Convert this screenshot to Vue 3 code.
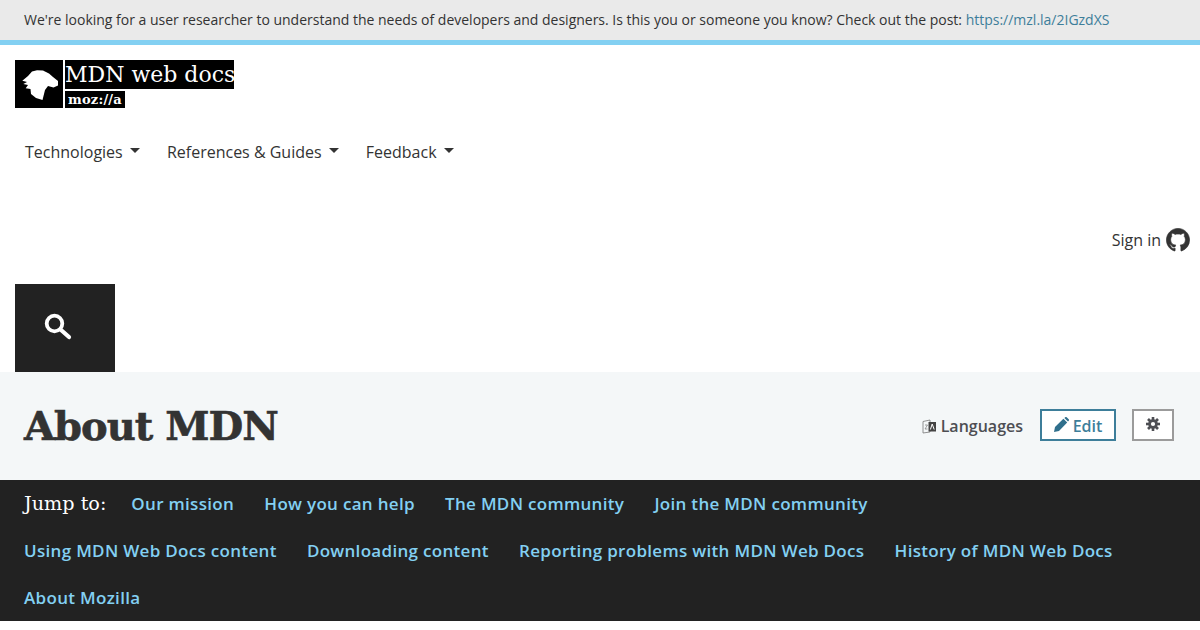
<script setup>
const nav = ['Technologies', 'References & Guides', 'Feedback']
const jumpRows = [
  ['Our mission', 'How you can help', 'The MDN community', 'Join the MDN community'],
  ['Using MDN Web Docs content', 'Downloading content', 'Reporting problems with MDN Web Docs', 'History of MDN Web Docs'],
  ['About Mozilla']
]
</script>

<template>
  <div class="page">
    <div class="banner">
      <p>We're looking for a user researcher to understand the needs of developers and designers. Is this you or someone you know? Check out the post: <a>https://mzl.la/2IGzdXS</a></p>
    </div>

    <header class="header">
      <div class="logo">
        <div class="logo-mark">
          <svg width="48" height="48" viewBox="0 0 48 48">
            <path fill="#fff" d="M7.3 20.7 L13 16 L17 11.5 L22 10.3 L28 10.5 L34 13.5 L38 17 L43 21 L43 25.5 L38.5 27.5 L33 26 L30 30 L28.5 36 L27.5 40 L21 38 L16 34 L15.5 29 L10.7 28.3 L13 25 L8.3 24 L12 22 Z"/>
          </svg>
        </div>
        <div class="logo-words">
          <div class="logo-title">MDN web docs</div>
          <div class="logo-moz">moz://a</div>
        </div>
      </div>

      <nav class="nav">
        <a v-for="item in nav" :key="item" class="nav-item">{{ item }}<span class="caret"></span></a>
      </nav>

      <div class="signin">
        <span>Sign in</span>
        <svg width="24" height="24" viewBox="0 0 16 16">
          <path fill="#333" stroke="#333" stroke-width=".45" d="M8 .3C3.75.3.3 3.75.3 8c0 3.4 2.2 6.3 5.27 7.3.38.07.52-.16.52-.37 0-.18-.01-.79-.01-1.43-1.93.36-2.43-.47-2.59-.9-.09-.22-.46-.9-.79-1.09-.27-.14-.65-.5-.01-.51.6-.01 1.04.56 1.18.79.69 1.16 1.8.84 2.24.63.07-.5.27-.84.49-1.03-1.71-.19-3.5-.86-3.5-3.8 0-.84.3-1.53.79-2.07-.08-.19-.35-.98.08-2.04 0 0 .64-.2 2.12.79.62-.17 1.27-.26 1.92-.26s1.31.09 1.92.26c1.47-1 2.12-.79 2.12-.79.42 1.06.15 1.85.08 2.04.49.54.79 1.22.79 2.07 0 2.95-1.8 3.61-3.51 3.8.28.24.52.7.52 1.42 0 1.03-.01 1.86-.01 2.12 0 .2.14.44.53.37A7.7 7.7 0 0 0 15.7 8C15.7 3.75 12.25.3 8 .3z"/>
        </svg>
      </div>

      <div class="search">
        <svg width="28" height="28" viewBox="0 0 28 28">
          <circle cx="10.5" cy="11.5" r="7.8" fill="none" stroke="#fff" stroke-width="3.8"/>
          <path d="M16.5 17.5 L25 25" stroke="#fff" stroke-width="4.2" stroke-linecap="round"/>
        </svg>
      </div>
    </header>

    <section class="title-bar">
      <h1>About MDN</h1>
      <div class="actions">
        <a class="languages">
          <svg width="15" height="15" viewBox="0 0 15 15">
            <path d="M1 2.5 L8 1 V13 L1 14 Z" fill="#f4f7f8" stroke="#777" stroke-width=".8"/>
            <rect x="6.5" y="3" width="7.5" height="9.5" fill="#444"/>
            <path d="M8.4 10.5 L10.2 5 L12.2 10.5" fill="none" stroke="#fff" stroke-width="1"/>
            <path d="M3 6 H5.5 L3 10 H5.5" fill="none" stroke="#777" stroke-width=".7"/>
          </svg>
          Languages
        </a>
        <a class="btn btn-edit">
          <svg width="15" height="15" viewBox="0 0 15 15" class="edit-icon">
            <path fill="#2f6f8c" d="M0 15 L1 10 L9.4 1.8 L13.2 5.6 L5 14 Z M10.4 .9 L11.2 .2 Q12 -.3 12.7 .3 L14.7 2.3 Q15.3 3 14.7 3.8 L14 4.6 Z"/>
          </svg>
          Edit
        </a>
        <a class="btn btn-gear">
          <svg width="14" height="14" viewBox="0 0 14 14">
            <g stroke="#4d4e53" stroke-width="2.6">
              <path d="M7 0 V14"/><path d="M0 7 H14"/><path d="M2 2 L12 12"/><path d="M12 2 L2 12"/>
            </g>
            <circle cx="7" cy="7" r="4.8" fill="#4d4e53"/>
            <circle cx="7" cy="7" r="2.1" fill="#fff"/>
          </svg>
        </a>
      </div>
    </section>

    <section class="jump">
      <div v-for="(row, i) in jumpRows" :key="i" class="jump-row">
        <span v-if="i === 0" class="jump-label">Jump to:</span>
        <a v-for="link in row" :key="link">{{ link }}</a>
      </div>
    </section>
  </div>
</template>

<style>
html, body { margin: 0; background: #fff; overflow: hidden; }
</style>

<style scoped>
.page {
  width: 1200px;
  height: 630px;
  overflow: hidden;
  font-family: "Open Sans", sans-serif;
  color: #333;
}
.banner {
  background: #eaeaea;
  border-bottom: 5px solid #83d0f2;
  padding: 0 24px 2px;
  box-sizing: content-box;
  height: 38px;
  display: flex;
  align-items: center;
}
.banner p { margin: 0; font-size: 14px; color: #333; letter-spacing: -.007px; white-space: nowrap; }
.banner a { color: #3d7e9a; }

.header {
  height: 327px;
  padding: 15px 10px 0 15px;
  box-sizing: border-box;
  display: flex;
  flex-direction: column;
  background: #fff;
}
.logo { display: flex; gap: 2px; height: 48px; }
.logo-mark { width: 48px; height: 48px; background: #000; }
.logo-words { display: flex; flex-direction: column; gap: 2px; align-items: flex-start; }
.logo-title {
  width: 169px;
  height: 29px;
  box-sizing: border-box;
  background: #000;
  color: #fff;
  font-family: "DejaVu Serif", serif;
  font-size: 22px;
  font-weight: 400;
  line-height: 29px;
  white-space: nowrap;
  overflow: hidden;
}
.logo-moz {
  width: 60px;
  height: 17px;
  background: #000;
  color: #fff;
  font-family: "DejaVu Serif", serif;
  font-weight: 700;
  font-size: 13px;
  line-height: 17px;
  padding-left: 3px;
  box-sizing: border-box;
  letter-spacing: .2px;
}
.nav { display: flex; gap: 26.7px; padding: 32px 0 0 10px; height: 24px; }
.nav-item { display: flex; align-items: center; font-size: 16px; line-height: 24px; color: #333; white-space: nowrap; }
.caret {
  margin-left: 7.5px;
  margin-top: -3px;
  border-top: 5px solid #333;
  border-left: 5px solid transparent;
  border-right: 5px solid transparent;
}
.signin {
  display: flex;
  justify-content: flex-end;
  align-items: center;
  gap: 5px;
  margin-top: 64px;
  height: 24px;
  font-size: 16px;
  color: #333;
}
.search {
  margin-top: 32px;
  width: 100px;
  height: 88px;
  background: #222;
  box-sizing: border-box;
  padding: 28px 0 0 29px;
}
.title-bar {
  height: 108px;
  background: #f4f7f8;
  display: flex;
  align-items: center;
  justify-content: space-between;
  padding: 0 26px 0 24px;
  box-sizing: border-box;
}
h1 {
  margin: 0;
  font-family: "DejaVu Serif", serif;
  font-weight: 700;
  font-size: 40px;
  line-height: 1;
  color: #333;
  letter-spacing: -1px;
  -webkit-text-stroke: .6px #333;
}
.actions { display: flex; align-items: center; }
.languages {
  display: flex;
  align-items: center;
  gap: 4px;
  font-size: 16px;
  font-weight: 600;
  color: #4d4e53;
  margin-right: 17px;
}
.btn {
  height: 32px;
  box-sizing: border-box;
  background: #fff;
  display: flex;
  align-items: center;
  justify-content: center;
  font-size: 16px;
  font-weight: 600;
  margin-bottom: 2px;
}
.btn-edit {
  width: 76px;
  border: 2px solid #3d7e9a;
  color: #3d7e9a;
  gap: 4px;
  margin-right: 16px;
  padding-top: 2px;
}
.edit-icon { margin-top: -3px; }
.btn-gear { width: 42px; border: 2px solid #9b9b9b; padding-bottom: 3px; }
.jump {
  height: 141px;
  background: #222;
  padding: 0 24px;
  box-sizing: border-box;
}
.jump-row { display: flex; gap: 30.2px; height: 47px; align-items: center; white-space: nowrap; }
.jump-row a { color: #83d0f2; font-size: 17px; font-weight: 600; letter-spacing: .31px; }
.jump-label {
  color: #fff;
  font-family: "DejaVu Serif", serif;
  font-size: 19.2px;
  margin-right: -5.2px;
}
</style>
